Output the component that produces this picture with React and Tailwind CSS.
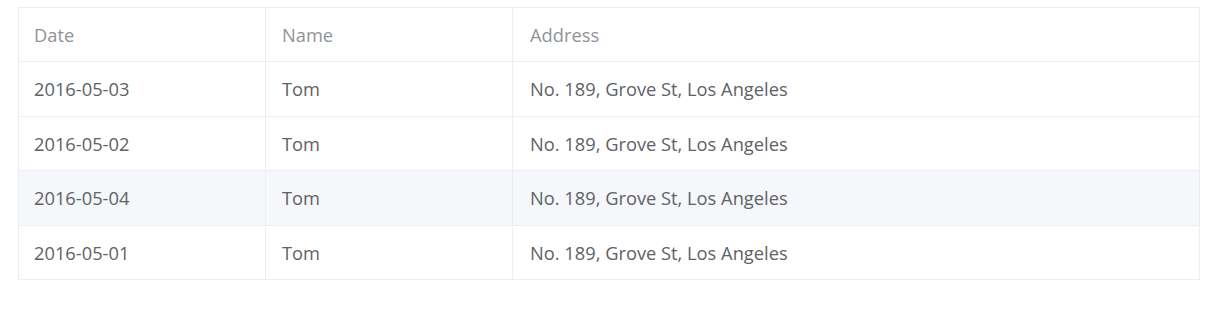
export default function App() {
  const rows = [
    { date: "2016-05-03", h: "h-[55px]", bg: "bg-white", pad: "" },
    { date: "2016-05-02", h: "h-[54px]", bg: "bg-white", pad: "" },
    { date: "2016-05-04", h: "h-[55px]", bg: "bg-[#f5f7fa]", pad: "" },
    { date: "2016-05-01", h: "h-[53px]", bg: "bg-white", pad: "pt-[1px]" },
  ];
  const font = { fontFamily: '"Open Sans", "Noto Sans", sans-serif' };
  return (
    <div className="w-[1226px] h-[330px] bg-white pt-[7px] pl-[18px]" style={font}>
      <div className="w-[1182px] border border-[#ebeef5] text-[18.3px]">
        <div className="flex h-[54px] border-b border-[#ebeef5] text-[#909399]">
          <div className="w-[247px] border-r border-[#ebeef5] pl-[15px] flex items-center">Date</div>
          <div className="w-[247px] border-r border-[#ebeef5] pl-[16px] flex items-center">Name</div>
          <div className="flex-1 pl-[17px] flex items-center">Address</div>
        </div>
        {rows.map((r, i) => (
          <div
            key={i}
            className={`flex ${r.h} ${r.bg} ${r.pad} text-[#606266] ${i < rows.length - 1 ? "border-b border-[#ebeef5]" : ""}`}
          >
            <div className="w-[247px] border-r border-[#ebeef5] pl-[15px] flex items-center">{r.date}</div>
            <div className="w-[247px] border-r border-[#ebeef5] pl-[16px] flex items-center">Tom</div>
            <div className="flex-1 pl-[17px] flex items-center">No. 189, Grove St, Los Angeles</div>
          </div>
        ))}
      </div>
    </div>
  );
}
